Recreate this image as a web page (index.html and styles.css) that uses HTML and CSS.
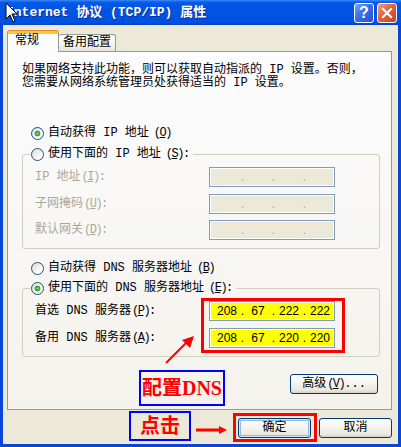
FILE: index.html
```html
<html>

<head>
  <title>Internet 协议 (TCP/IP) 属性</title>
  <link rel="stylesheet" href="styles.css">
</head>

<body>
  <div class="window">
    <div class="titlebar">
      <span class="title">Internet 协议 (TCP/IP) 属性</span>
      <span class="tbtn help">?</span>
      <span class="tbtn close">
        <svg width="12" height="12" viewBox="0 0 12 12"><path d="M2 2 L10 10 M10 2 L2 10" stroke="#fff" stroke-width="2.2" stroke-linecap="square"/></svg>
      </span>
    </div>

    <div class="frame">
      <div class="tabs">
        <div class="tab on">常规</div>
        <div class="tab">备用配置</div>
      </div>

      <div class="panel">
        <p class="intro">如果网络支持此功能，则可以获取自动指派的 IP 设置。否则，<br>您需要从网络系统管理员处获得适当的 IP 设置。</p>

        <div class="opt top"><span class="radio on"></span>自动获得 IP 地址<span class="key">(<u>O</u>)</span></div>

        <fieldset class="grp">
          <legend><span class="opt"><span class="radio"></span>使用下面的 IP 地址<span class="key">(<u>S</u>):</span></span></legend>
          <div class="row off"><span class="lbl">IP 地址<span class="key">(<u>I</u>):</span></span>
            <div class="ip"><i></i><b>.</b><i></i><b>.</b><i></i><b>.</b><i></i></div>
          </div>
          <div class="row off"><span class="lbl">子网掩码<span class="key">(<u>U</u>):</span></span>
            <div class="ip"><i></i><b>.</b><i></i><b>.</b><i></i><b>.</b><i></i></div>
          </div>
          <div class="row off"><span class="lbl">默认网关<span class="key">(<u>D</u>):</span></span>
            <div class="ip"><i></i><b>.</b><i></i><b>.</b><i></i><b>.</b><i></i></div>
          </div>
        </fieldset>

        <div class="opt mid"><span class="radio"></span>自动获得 DNS 服务器地址<span class="key">(<u>B</u>)</span></div>

        <fieldset class="grp dnsgrp">
          <legend><span class="opt"><span class="radio on"></span>使用下面的 DNS 服务器地址<span class="key">(<u>E</u>):</span></span></legend>
          <div class="row"><span class="lbl">首选 DNS 服务器<span class="key">(<u>P</u>):</span></span>
            <div class="ip dns"><i>208</i><b>.</b><i>67</i><b>.</b><i>222</i><b>.</b><i>222</i></div>
          </div>
          <div class="row"><span class="lbl">备用 DNS 服务器<span class="key">(<u>A</u>):</span></span>
            <div class="ip dns"><i>208</i><b>.</b><i>67</i><b>.</b><i>220</i><b>.</b><i>220</i></div>
          </div>
        </fieldset>

        <div class="adv"><button class="btn wide">高级<span class="key">(<u>V</u>)</span>...</button></div>
      </div>

      <div class="actions">
        <button class="btn def">确定</button>
        <button class="btn">取消</button>
      </div>
    </div>

    <!-- annotations drawn over the dialog -->
    <div class="note red dnsbox"></div>
    <svg class="arrow up" width="40" height="36" viewBox="0 0 40 36">
      <line x1="6" y1="31" x2="27" y2="10" stroke="#f00" stroke-width="2"/>
      <polygon points="34,4 22,8 30,16" fill="#f00"/>
    </svg>
    <div class="note blue cfg">配置DNS</div>
    <div class="note blue click">点击</div>
    <svg class="arrow right" width="34" height="12" viewBox="0 0 34 12">
      <line x1="2" y1="6" x2="27" y2="6" stroke="#f00" stroke-width="3"/>
      <polygon points="25,2 33,6 25,10" fill="#f00"/>
    </svg>
    <div class="note red okbox"></div>

    <svg class="cursor" width="14" height="22" viewBox="0 0 14 22">
      <path d="M1 1 V17 L5 13 L8 20 L10 19 L7 12 H12 Z" fill="#fff" stroke="#000" stroke-width="1" stroke-linejoin="miter"/>
    </svg>
  </div>
</body>

</html>
```

FILE: styles.css
```css
body {
  margin: 0;
  font: 12px/16px "Liberation Mono", "Noto Sans CJK SC", monospace;
  color: #000;
}

.window {
  position: relative;
  width: 401px;
  height: 447px;
  display: flex;
  flex-direction: column;
  background: #0846D8;
}

/* title bar */
.titlebar {
  height: 25px;
  display: flex;
  align-items: center;
  padding: 0 4px 0 6px;
  background: linear-gradient(#3D8CF7 0, #0A5DEB 2px, #0055E5 5px, #0054E3 60%, #004FDD 90%, #0044CC 100%);
}

.title {
  flex: 1;
  color: #fff;
  font: bold 13px/16px "Liberation Mono", "Noto Sans CJK SC", monospace;
  text-shadow: 1px 1px #0A2D9A;
}

.tbtn {
  width: 20px;
  height: 20px;
  box-sizing: border-box;
  border: 1px solid #fff;
  border-radius: 3px;
  margin-left: 3px;
  display: flex;
  align-items: center;
  justify-content: center;
  color: #fff;
}

.help {
  background: linear-gradient(135deg, #7AA5F8, #3A6EE6 45%, #2454D6);
  font: bold 16px/1 "Liberation Sans", sans-serif;
}

.close {
  background: linear-gradient(135deg, #F2A284, #E2603A 45%, #C8441E);
}

/* dialog body */
.frame {
  flex: 1;
  margin: 0 3px 3px;
  padding: 6px 6px 0 4px;
  background: #ECE9D8;
}

.tabs {
  display: flex;
  align-items: flex-end;
  height: 21px;
  margin-bottom: -1px;
  position: relative;
  z-index: 1;
}

.tab {
  height: 17px;
  box-sizing: border-box;
  padding: 0 4px;
  margin-bottom: 1px;
  border: 1px solid #919B9C;
  border-bottom: 0;
  border-left: 0;
  border-radius: 3px 3px 0 0;
  background: linear-gradient(#FFFFFF, #F4F3EE 60%, #E5E3DA);
  line-height: 16px;
}

.tab.on {
  width: 52px;
  height: 21px;
  margin-bottom: 0;
  padding: 0 0 0 7px;
  border-left: 1px solid #919B9C;
  border-top: 3px solid #FFC73C;
  box-shadow: 0 -1px #E68B2C;
  background: #FCFCFE;
  line-height: 14px;
}

.panel {
  height: 359px;
  box-sizing: border-box;
  padding: 12px 11px 0 14px;
  border: 1px solid #919B9C;
  background: linear-gradient(#FCFCFE, #F6F5F1 70%, #F3F2EC);
}

.intro {
  margin: 0;
  line-height: 13px;
}

/* access key like (O) sits tight, as in the bitmap font */
.key {
  letter-spacing: -1.5px;
  margin-left: 1px;
}

.opt {
  display: flex;
  align-items: center;
  height: 16px;
  gap: 4px;
  white-space: nowrap;
}

.opt.top {
  margin: 35px 0 0 9px;
}

.opt.mid {
  margin: 11px 0 0 9px;
}

.radio {
  width: 13px;
  height: 13px;
  box-sizing: border-box;
  border: 1px solid #1C5180;
  border-radius: 50%;
  background: linear-gradient(135deg, #DCDBD4, #FFFFFF 80%);
}

.radio.on {
  background: radial-gradient(circle, #7EE07E 0, #3DBA3D 1.5px, #21A121 2.6px, transparent 3.2px), linear-gradient(135deg, #DCDBD4, #FFFFFF 80%);
}

.grp {
  margin: 5px 0 0;
  padding: 5px 0 8px 12px;
  border: 1px solid #D0D0BF;
  border-radius: 3px;
  min-width: 0;
}

.dnsgrp {
  margin-top: 4px;
}

.grp legend {
  padding: 0 4px 0 1px;
  margin-left: -5px;
}

.row {
  display: flex;
  align-items: center;
  height: 20px;
}

.row + .row {
  margin-top: 6.5px;
}

.lbl {
  width: 174px;
  white-space: nowrap;
}

.off .lbl {
  color: #ACA899;
}

.ip {
  width: 126px;
  height: 20px;
  box-sizing: border-box;
  display: flex;
  align-items: center;
  padding-left: 4px;
  border: 1px solid #7F9DB9;
  box-shadow: inset 0 0 0 1px #fff;
  background: #ECE9D8;
  font: 12px/16px "Liberation Sans", sans-serif;
  color: #ACA899;
}

.ip i {
  width: 26px;
  font-style: normal;
  text-align: center;
}

.ip b {
  width: 5px;
  font-weight: normal;
  text-align: center;
}

.ip.dns {
  background: #FFFF00;
  color: #000;
}

.adv {
  display: flex;
  justify-content: flex-end;
  margin: 17px 2px 0 0;
}

.btn {
  width: 73px;
  height: 20px;
  box-sizing: border-box;
  padding: 0;
  border: 1px solid #003C74;
  border-radius: 3px;
  background: linear-gradient(#FFFFFF, #F5F4F0 45%, #E9E7DF 85%, #D6D0C5);
  font: 12px/16px "Liberation Mono", "Noto Sans CJK SC", monospace;
  color: #000;
}

.btn.wide {
  width: 88px;
}

.btn.def {
  box-shadow: inset 0 0 0 1px #CEE7FF, inset 0 0 0 2px #98B8EA;
}

.actions {
  display: flex;
  justify-content: flex-end;
  gap: 8px;
  margin-top: 8px;
}

/* red / blue hand-drawn annotations */
.note {
  position: absolute;
  box-sizing: border-box;
}

.note.red {
  border: 3px solid #FF0000;
}

.note.blue {
  border: 2px solid #0000FF;
  display: flex;
  align-items: center;
  justify-content: center;
  color: #FF0000;
  font: bold 20px/1 "Liberation Serif", "Noto Sans CJK SC", serif;
}

.dnsbox {
  left: 201px;
  top: 298px;
  width: 144px;
  height: 55px;
}

.okbox {
  left: 233px;
  top: 413px;
  width: 84px;
  height: 29px;
}

.cfg {
  left: 139px;
  top: 370px;
  width: 86px;
  height: 36px;
}

.click {
  left: 129px;
  top: 411px;
  width: 62px;
  height: 30px;
}

.arrow {
  position: absolute;
}

.arrow.up {
  left: 160px;
  top: 332px;
}

.arrow.right {
  left: 194px;
  top: 424px;
}

.cursor {
  position: absolute;
  left: 5px;
  top: 2px;
}
```
